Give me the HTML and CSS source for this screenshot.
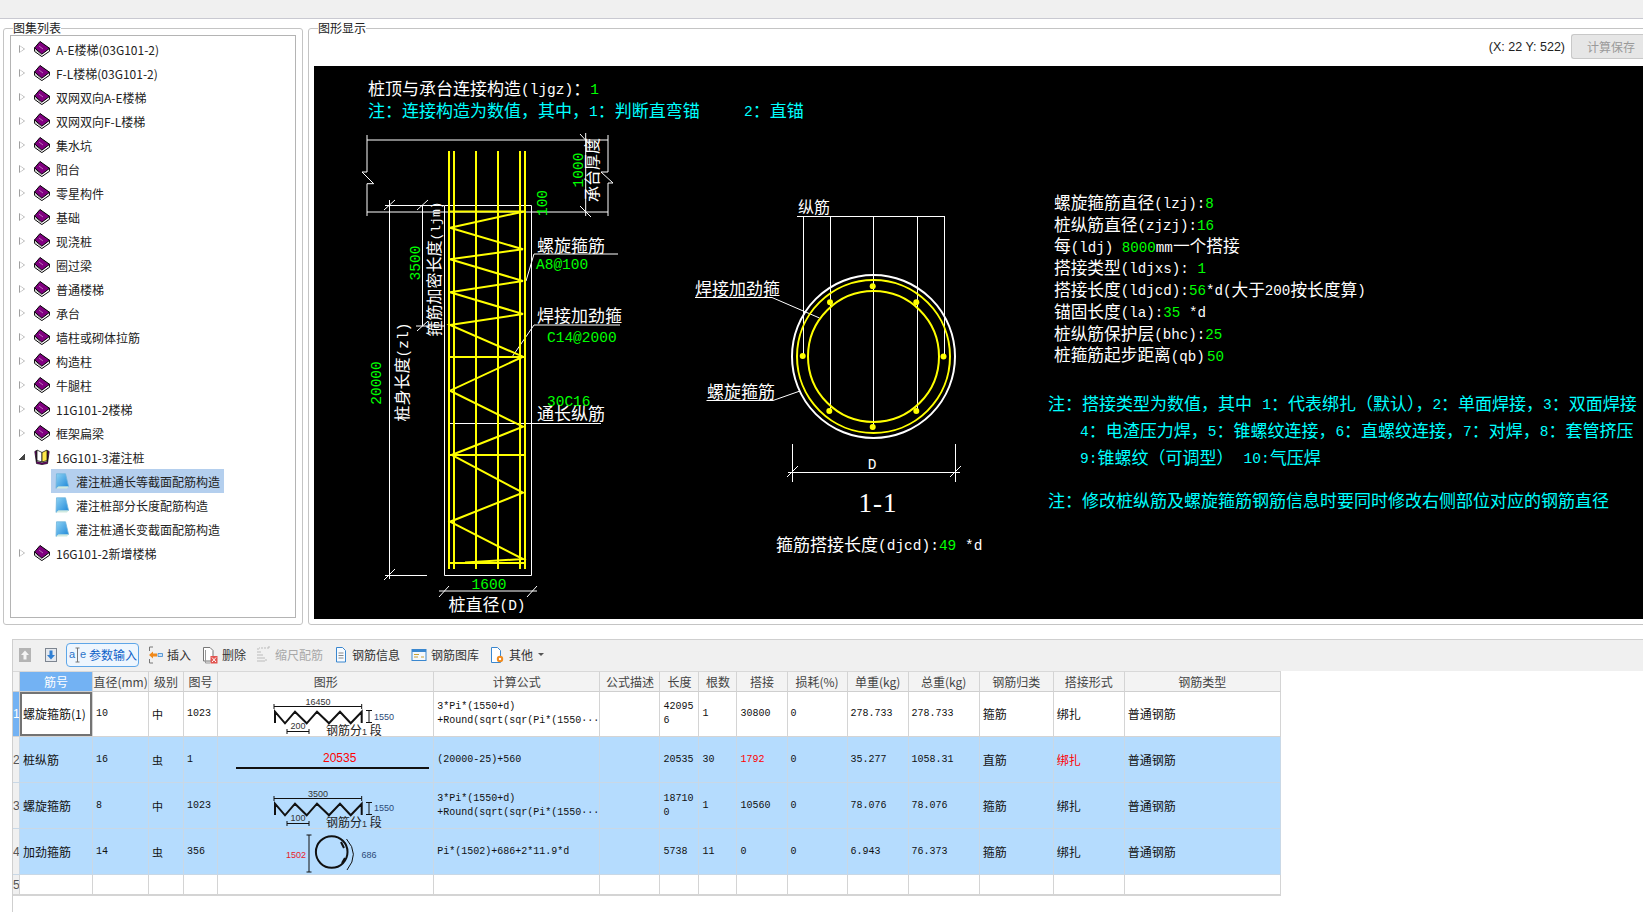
FILE: index.html
```html
<!DOCTYPE html>
<html lang="zh-CN">
<head>
<meta charset="utf-8">
<title>图集列表</title>
<link rel="stylesheet" href="styles.css">
</head>
<body>
<svg class="defs" width="0" height="0" aria-hidden="true">
  <defs>
    <symbol id="book" viewBox="0 0 16 16">
      <path d="M.6 6.9V10.4L7.8 15.6 15.6 10.2V7.4Z" fill="#fff" stroke="#000" stroke-width="1"/>
      <path d="M6 .5 15.6 7.3 7.8 13.2.6 6.9Z" fill="#800080" stroke="#000" stroke-width="1"/>
      <path d="M1.5 9 7.8 14" stroke="#888" stroke-width=".8" fill="none"/>
      <path d="M5 5 9 8" stroke="#c48ac4" stroke-width=".8" fill="none"/>
    </symbol>
    <symbol id="openbook" viewBox="0 0 16 16">
      <path d="M.8 2.500 2.500 14.500 8 15.500 13.500 14.500 15.200 2.500 13.500 1.500 13.500 12.500 8 14 2.500 12.500 2.500 1.500Z" fill="#800080" stroke="#000" stroke-width=".7"/>
      <path d="M3 1 8 3.500V13L3 11.500Z" fill="#fff" stroke="#000" stroke-width=".7"/>
      <path d="M13 1 8 3.500V13L13 11.500Z" fill="#ffe94a" stroke="#000" stroke-width=".7"/>
    </symbol>
    <linearGradient id="docblue" x1="0" y1="0" x2="1" y2="1">
      <stop offset="0" stop-color="#8fd3f4"/>
      <stop offset="1" stop-color="#1c86d8"/>
    </linearGradient>
    <symbol id="doc" viewBox="0 0 14 16">
      <path d="M1.500 .8H10.500L13.600 13.500H3.500L1 15.500Z" fill="url(#docblue)" stroke="#6fb4dc" stroke-width=".8"/>
      <path d="M1 15.500 3.500 13.500H13.600L12 15.500Z" fill="#cfe9e0"/>
    </symbol>
  </defs>
</svg>

<div class="topbar"></div>

<main class="main">
  <fieldset class="group group-left">
    <legend class="legend">图集列表</legend>
    <ul class="tree">
      <li class="node"><i class="arrow"></i><svg class="book"><use href="#book"/></svg><span>A-E楼梯(03G101-2)</span></li>
      <li class="node"><i class="arrow"></i><svg class="book"><use href="#book"/></svg><span>F-L楼梯(03G101-2)</span></li>
      <li class="node"><i class="arrow"></i><svg class="book"><use href="#book"/></svg><span>双网双向A-E楼梯</span></li>
      <li class="node"><i class="arrow"></i><svg class="book"><use href="#book"/></svg><span>双网双向F-L楼梯</span></li>
      <li class="node"><i class="arrow"></i><svg class="book"><use href="#book"/></svg><span>集水坑</span></li>
      <li class="node"><i class="arrow"></i><svg class="book"><use href="#book"/></svg><span>阳台</span></li>
      <li class="node"><i class="arrow"></i><svg class="book"><use href="#book"/></svg><span>零星构件</span></li>
      <li class="node"><i class="arrow"></i><svg class="book"><use href="#book"/></svg><span>基础</span></li>
      <li class="node"><i class="arrow"></i><svg class="book"><use href="#book"/></svg><span>现浇桩</span></li>
      <li class="node"><i class="arrow"></i><svg class="book"><use href="#book"/></svg><span>圈过梁</span></li>
      <li class="node"><i class="arrow"></i><svg class="book"><use href="#book"/></svg><span>普通楼梯</span></li>
      <li class="node"><i class="arrow"></i><svg class="book"><use href="#book"/></svg><span>承台</span></li>
      <li class="node"><i class="arrow"></i><svg class="book"><use href="#book"/></svg><span>墙柱或砌体拉筋</span></li>
      <li class="node"><i class="arrow"></i><svg class="book"><use href="#book"/></svg><span>构造柱</span></li>
      <li class="node"><i class="arrow"></i><svg class="book"><use href="#book"/></svg><span>牛腿柱</span></li>
      <li class="node"><i class="arrow"></i><svg class="book"><use href="#book"/></svg><span>11G101-2楼梯</span></li>
      <li class="node"><i class="arrow"></i><svg class="book"><use href="#book"/></svg><span>框架扁梁</span></li>
      <li class="node"><i class="arrow open"></i><svg class="book"><use href="#openbook"/></svg><span>16G101-3灌注桩</span></li>
      <li class="leaf"><div class="leaf-in selected"><svg class="docicon"><use href="#doc"/></svg><span>灌注桩通长等截面配筋构造</span></div></li>
      <li class="leaf"><div class="leaf-in"><svg class="docicon"><use href="#doc"/></svg><span>灌注桩部分长度配筋构造</span></div></li>
      <li class="leaf"><div class="leaf-in"><svg class="docicon"><use href="#doc"/></svg><span>灌注桩通长变截面配筋构造</span></div></li>
      <li class="node"><i class="arrow"></i><svg class="book"><use href="#book"/></svg><span>16G101-2新增楼梯</span></li>
    </ul>
  </fieldset>

  <fieldset class="group group-right">
    <legend class="legend">图形显示</legend>
    <div class="viewbar">
      <span class="coords">(X: 22 Y: 522)</span>
      <button class="savebtn" type="button">计算保存</button>
    </div>
    <svg class="cad" viewBox="314 66 1329 553" width="1329" height="553">
      <g class="ln">
        <path d="M367 135V172H362L373.700 183.700H367V216"/>
        <path d="M367 140H608M367 212H608"/>
        <path d="M608 135V172H601L613 183H608V216"/>
        <path d="M585.700 133V216M580 134 591 146M580 206 591 217"/>
        <path d="M444.500 205.500H531.500V575.500H444.500Z"/>
        <path d="M385 205.500H444M389.500 200V579M384 210 395 200M417 210 428 200M422.500 205V326M416 326H444M417 331 428 321M385 575.500H427M384 580 395 569"/>
        <path d="M439 591H537M439 597 449 586M527 597 537 586"/>
        <path d="M534 254H618M534 254 526 281"/>
        <path d="M534 325H620M534 325 512 357"/>
        <path d="M449 423.500H601"/>
      </g>
      <g class="yl">
        <path d="M449 151V569M454 151V569M476 151V569M498 151V569M520 151V569M525 151V569"/>
        <path d="M449 211.500H525M449 357H525M449 455H525M449 563H525"/>
        <path d="M523 211.700 450 227.700 523 249.300 450 259.300 523 281 450 292.300 523 314 450 325 523 356.700 450 390.700 523 426.700 451.700 455 523 492.700 450 521.700 523 559 465 562.500"/>
      </g>
      <g class="ln">
        <path d="M797 216.500H944.500M803.500 216V356M830.500 216V411M873.500 216V427M917.500 216V411M944.500 216V356"/>
        <path d="M695 297.500H772L819.500 318M706.500 400.500H773L800 391"/>
        <path d="M788 472.500H960M792.500 444V482M955.500 444V482M787 477 798 466M950 477 961 466"/>
      </g>
      <circle class="ring-w" cx="873.500" cy="356.500" r="81.500"/>
      <circle class="ring-y" cx="873.500" cy="356.500" r="76.500"/>
      <circle class="ring-y" cx="873.500" cy="356.500" r="65.500"/>
      <g class="dots">
        <circle cx="943.500" cy="356.500" r="3"/><circle cx="802.700" cy="356" r="3"/>
        <circle cx="872.700" cy="286.300" r="3"/><circle cx="872.700" cy="427" r="3"/>
        <circle cx="830" cy="302.300" r="3"/><circle cx="916.300" cy="302.300" r="3"/>
        <circle cx="829.300" cy="411" r="3"/><circle cx="916.300" cy="411" r="3"/>
      </g>

      <g transform="translate(1 0)">
        <text class="w sm mid" x="593" y="170" transform="rotate(-90 593 170)">承台厚度</text>
        <text class="g l mid" x="578" y="170" transform="rotate(-90 578 170)">1000</text>
        <text class="g l mid" x="542" y="203" transform="rotate(-90 542 203)">100</text>
        <text class="g l mid" x="415" y="263" transform="rotate(-90 415 263)">3500</text>
        <text class="w sm mid" x="435" y="269" transform="rotate(-90 435 269)">箍筋加密长度<tspan class="ls">(ljm)</tspan></text>
        <text class="g l mid" x="376" y="383" transform="rotate(-90 376 383)">20000</text>
        <text class="w sm mid" x="403" y="372" transform="rotate(-90 403 372)">桩身长度<tspan class="l">(zl)</tspan></text>
      </g>

      <g transform="translate(0 1)">
        <text class="w" x="368" y="89">桩顶与承台连接构造<tspan class="l">(ljgz)</tspan>：<tspan class="g l">1</tspan></text>
        <text class="c" x="368" y="111">注：连接构造为数值，其中，<tspan class="l">1</tspan>：判断直弯锚</text>
        <text class="c" x="744" y="111"><tspan class="l">2</tspan>：直锚</text>

        <text class="w" x="537" y="246">螺旋箍筋</text>
        <text class="g l" x="536" y="264">A8@100</text>
        <text class="w" x="537" y="316">焊接加劲箍</text>
        <text class="g l" x="547" y="337">C14@2000</text>
        <text class="g l" x="547" y="401">30C16</text>
        <text class="w" x="537" y="414">通长纵筋</text>
        <text class="g l mid" x="489" y="584">1600</text>
        <text class="w mid" x="487" y="605">桩直径<tspan class="l">(D)</tspan></text>

        <text class="w sm" x="798" y="208">纵筋</text>
        <text class="w" x="695" y="289">焊接加劲箍</text>
        <text class="w" x="707" y="392">螺旋箍筋</text>
        <text class="w l mid" x="872" y="464">D</text>
        <text class="w big mid" x="878" y="502">1-1</text>
        <text class="w" x="776" y="545">箍筋搭接长度<tspan class="l">(djcd):</tspan><tspan class="g l">49 </tspan><tspan class="l">*d</tspan></text>

        <g class="list">
          <text class="w" x="1054" y="203">螺旋箍筋直径<tspan class="l">(lzj):</tspan><tspan class="g l">8</tspan></text>
          <text class="w" x="1054" y="225">桩纵筋直径<tspan class="l">(zjzj):</tspan><tspan class="g l">16</tspan></text>
          <text class="w" x="1054" y="246.500">每<tspan class="l">(ldj) </tspan><tspan class="g l">8000</tspan><tspan class="l">mm</tspan>一个搭接</text>
          <text class="w" x="1054" y="268">搭接类型<tspan class="l">(ldjxs): </tspan><tspan class="g l">1</tspan></text>
          <text class="w" x="1054" y="290">搭接长度<tspan class="l">(ldjcd):</tspan><tspan class="g l">56</tspan><tspan class="l">*d(</tspan>大于<tspan class="l">200</tspan>按长度算<tspan class="l">)</tspan></text>
          <text class="w" x="1054" y="312">锚固长度<tspan class="l">(la):</tspan><tspan class="g l">35 </tspan><tspan class="l">*d</tspan></text>
          <text class="w" x="1054" y="334">桩纵筋保护层<tspan class="l">(bhc):</tspan><tspan class="g l">25</tspan></text>
          <text class="w" x="1054" y="355.500">桩箍筋起步距离<tspan class="l">(qb)</tspan><tspan class="g l" dx="2">50</tspan></text>
        </g>

        <text class="c" x="1048" y="404">注：搭接类型为数值，其中 <tspan class="l">1</tspan>：代表绑扎（默认），<tspan class="l">2</tspan>：单面焊接，<tspan class="l">3</tspan>：双面焊接</text>
        <text class="c" x="1080" y="431"><tspan class="l">4</tspan>：电渣压力焊，<tspan class="l">5</tspan>：锥螺纹连接，<tspan class="l">6</tspan>：直螺纹连接，<tspan class="l">7</tspan>：对焊，<tspan class="l">8</tspan>：套管挤压</text>
        <text class="c" x="1080" y="458"><tspan class="l">9:</tspan>锥螺纹（可调型） <tspan class="l">10:</tspan>气压焊</text>
        <text class="c" x="1048" y="501">注：修改桩纵筋及螺旋箍筋钢筋信息时要同时修改右侧部位对应的钢筋直径</text>
      </g>
    </svg>
  </fieldset>
</main>

<section class="panel">
  <div class="toolbar">
    <svg class="ic up" width="12" height="14" viewBox="0 0 12 14"><rect width="12" height="14" fill="#b4b4b4"/><path d="M6 2.500 10 7H7.500V11.500H4.500V7H2Z" fill="#f4f4f4"/></svg>
    <svg class="ic down" width="12" height="14" viewBox="0 0 12 14"><rect x=".5" y=".5" width="11" height="13" fill="#e4e8ee" stroke="#7d8590"/><path d="M6 11.500 10 7H7.500V2.500H4.500V7H2Z" fill="#2f7fd4"/></svg>
    <button class="tb tb-active" type="button">
      <svg width="18" height="18" viewBox="0 0 18 18"><text class="ae" x="0" y="12">a</text><text class="ae" x="11" y="12">e</text><path d="M8.500 2V16M6.500 2H10.500M6.500 16H10.500" stroke="#777" fill="none"/></svg>
      <span>参数输入</span>
    </button>
    <div class="tb"><svg width="15" height="20" viewBox="0 0 15 20"><path d="M5 2H1.500V6M5 18H1.500V14" stroke="#777" fill="none"/><path d="M1 10 5 6.500V8.500H9V11.500H5V13.500Z" fill="#f08a1d"/><path d="M10 8.500H14.500V11.500H10Z" fill="#cfe3f6" stroke="#3a87cf" stroke-width=".8"/></svg><span>插入</span></div>
    <div class="tb"><svg width="16" height="20" viewBox="0 0 16 20"><path d="M1.500 2.500H8L11 5.500V16H1.500Z" fill="#fff" stroke="#777"/><path d="M3.500 5V18H8" fill="none" stroke="#999"/><rect x="8.500" y="11" width="7" height="7.500" fill="#e2544f"/><path d="M10 12.500 14 17M14 12.500 10 17" stroke="#fff"/></svg><span>删除</span></div>
    <div class="tb off"><svg width="14" height="20" viewBox="0 0 14 20"><path d="M1 3V17M3 6V17M5 9V17M7 12V17M9 14V17M12 3H2M12 3V1" stroke="#bbb" stroke-dasharray="2 1" fill="none"/></svg><span>缩尺配筋</span></div>
    <div class="tb"><svg width="14" height="20" viewBox="0 0 14 20"><path d="M2.500 2.500H8.500L11.500 5.500V17H2.500Z" fill="#f7fbff" stroke="#3a87cf"/><path d="M4.500 8H9.500M4.500 10.500H9.500M4.500 13H9.500" stroke="#888"/></svg><span>钢筋信息</span></div>
    <div class="tb"><svg width="16" height="20" viewBox="0 0 16 20"><rect x="1" y="4.500" width="14" height="11" fill="#f4f8fc" stroke="#3a87cf"/><rect x="1" y="4.500" width="14" height="2.500" fill="#3a87cf"/><path d="M3 9.500H8M3 12H7M10 12H13" stroke="#c9a034"/></svg><span>钢筋图库</span></div>
    <div class="tb"><svg width="15" height="20" viewBox="0 0 15 20"><path d="M1.500 2.500H7.500L10.500 5.500V17.500H1.500Z" fill="#fff" stroke="#3a87cf"/><circle cx="10" cy="14" r="3.200" fill="#f08a1d"/><circle cx="10" cy="14" r="1.200" fill="#fff"/></svg><span>其他</span><i class="caret"></i></div>
  </div>

  <table class="grid">
    <colgroup>
      <col class="w8"><col class="w73"><col class="w56"><col class="w35"><col class="w34"><col class="w216"><col class="w166"><col class="w60"><col class="w39"><col class="w38"><col class="w50"><col class="w60"><col class="w61"><col class="w71"><col class="w74"><col class="w71"><col class="w156">
    </colgroup>
    <thead>
      <tr>
        <th></th><th class="th-active">筋号</th><th>直径(mm)</th><th>级别</th><th>图号</th><th>图形</th><th>计算公式</th><th>公式描述</th><th>长度</th><th>根数</th><th>搭接</th><th>损耗(%)</th><th>单重(kg)</th><th>总重(kg)</th><th>钢筋归类</th><th>搭接形式</th><th>钢筋类型</th>
      </tr>
    </thead>
    <tbody>
      <tr class="r1">
        <td class="num num-active">1</td><td class="z cur">螺旋箍筋(1)</td><td>10</td><td class="lv">中</td><td>1023</td>
        <td class="shape">
          <svg class="sh" viewBox="0 0 216 44" width="216" height="44">
            <path class="sl" d="M56 14.500H143.700M56 12V17M143.700 12V17"/>
            <path class="st" d="M57 31V19.700L67 31.300 77 19.700 88.700 31.300 99 19.700 111 31.300 122 19.700 132.700 31.300 143.700 19.700V31"/>
            <path class="sl" d="M148 18.500H154M151 18.500V30.500M148 30.500H154M69 39.500H91M69 37V42M91 37V42"/>
            <text class="sn mid" x="100" y="13">16450</text>
            <text class="sn bl" x="156" y="27.500">1550</text>
            <text class="sn mid" x="80" y="37">200</text>
            <text class="sz" x="108" y="43">钢筋分<tspan class="sn">1</tspan> 段</text>
          </svg>
        </td>
        <td>3*Pi*(1550+d)<br>+Round(sqrt(sqr(Pi*(1550···</td><td></td><td>42095<br>6</td><td>1</td><td>30800</td><td>0</td><td>278.733</td><td>278.733</td><td class="z">箍筋</td><td class="z">绑扎</td><td class="z">普通钢筋</td>
      </tr>
      <tr class="sel">
        <td class="num">2</td><td class="z">桩纵筋</td><td>16</td><td class="lv">虫</td><td>1</td>
        <td class="shape">
          <svg class="sh" viewBox="0 0 216 45" width="216" height="45">
            <text class="rn mid" x="121.700" y="25">20535</text>
            <path class="st" d="M18 31H211"/>
          </svg>
        </td>
        <td>(20000-25)+560</td><td></td><td>20535</td><td>30</td><td class="red">1792</td><td>0</td><td>35.277</td><td>1058.31</td><td class="z">直筋</td><td class="z red">绑扎</td><td class="z">普通钢筋</td>
      </tr>
      <tr class="sel">
        <td class="num">3</td><td class="z">螺旋箍筋</td><td>8</td><td class="lv">中</td><td>1023</td>
        <td class="shape">
          <svg class="sh" viewBox="0 0 216 45" width="216" height="45">
            <g transform="translate(0 1)">
              <path class="sl" d="M56 14.500H143.700M56 12V17M143.700 12V17"/>
              <path class="st" d="M57 31V19.700L67 31.300 77 19.700 88.700 31.300 99 19.700 111 31.300 122 19.700 132.700 31.300 143.700 19.700V31"/>
              <path class="sl" d="M148 18.500H154M151 18.500V30.500M148 30.500H154M69 39.500H91M69 37V42M91 37V42"/>
              <text class="sn mid" x="100" y="13">3500</text>
              <text class="sn bl" x="156" y="27">1550</text>
              <text class="sn mid" x="80" y="37">100</text>
              <text class="sz" x="108" y="43">钢筋分<tspan class="sn">1</tspan> 段</text>
            </g>
          </svg>
        </td>
        <td>3*Pi*(1550+d)<br>+Round(sqrt(sqr(Pi*(1550···</td><td></td><td>18710<br>0</td><td>1</td><td>10560</td><td>0</td><td>78.076</td><td>78.076</td><td class="z">箍筋</td><td class="z">绑扎</td><td class="z">普通钢筋</td>
      </tr>
      <tr class="sel">
        <td class="num">4</td><td class="z">加劲箍筋</td><td>14</td><td class="lv">虫</td><td>356</td>
        <td class="shape">
          <svg class="sh" viewBox="0 0 216 45" width="216" height="45">
            <path class="sl" d="M91 6V43M88.500 6H93.500M88.500 43H93.500"/>
            <circle class="sc" cx="113.700" cy="23" r="15.800"/>
            <path class="st" d="M123 13 126 19M124 34 127 29"/>
            <path class="sl" d="M128.500 10Q142 25 129 41"/>
            <text class="rs mid" x="78" y="29">1502</text>
            <text class="sn bl mid" x="151" y="29">686</text>
          </svg>
        </td>
        <td>Pi*(1502)+686+2*11.9*d</td><td></td><td>5738</td><td>11</td><td>0</td><td>0</td><td>6.943</td><td>76.373</td><td class="z">箍筋</td><td class="z">绑扎</td><td class="z">普通钢筋</td>
      </tr>
      <tr class="r5">
        <td class="num">5</td><td></td><td></td><td></td><td></td><td></td><td></td><td></td><td></td><td></td><td></td><td></td><td></td><td></td><td></td><td></td><td></td>
      </tr>
    </tbody>
  </table>
</section>
</body>
</html>
```

FILE: styles.css
```css
* { box-sizing: border-box; }

html, body {
  margin: 0;
  padding: 0;
  width: 1643px;
  height: 912px;
  overflow: hidden;
  background: #fff;
  font-family: "Noto Sans CJK SC", "Liberation Sans", sans-serif;
  font-size: 12px;
  color: #222;
}

.defs { position: absolute; }

.topbar {
  height: 19px;
  background: #f0f0f0;
  border-bottom: 1px solid #c9c9d1;
}

.main {
  display: flex;
  gap: 5px;
  padding: 3px 0 0 3px;
  width: 1660px;
}

.group {
  margin: 0;
  height: 603px;
  border: 1px solid #c4c4c4;
  border-radius: 3px;
  min-width: 0;
}

.group-left {
  width: 300px;
  padding: 1px 6px 6px 6px;
}

.group-right {
  width: 1342px;
  padding: 0 0 4px 5px;
}

.legend {
  padding: 0;
  margin-left: 3px;
  font-size: 12px;
  line-height: 12px;
  color: #222;
  background: #fff;
}

.group-right .legend { margin-left: 4px; }

.tree {
  list-style: none;
  margin: 0;
  padding: 1px 0 0;
  height: 100%;
  border: 1px solid #b4b4b4;
}

.node {
  display: flex;
  align-items: center;
  height: 24px;
  padding-left: 8px;
}

.arrow {
  width: 0;
  height: 0;
  margin-right: 9px;
  border-left: 6px solid #a0a0a0;
  border-top: 4.500px solid transparent;
  border-bottom: 4.500px solid transparent;
  position: relative;
}

.arrow::after {
  content: "";
  position: absolute;
  left: -5px;
  top: -3px;
  width: 0;
  height: 0;
  border-left: 4px solid #fff;
  border-top: 3px solid transparent;
  border-bottom: 3px solid transparent;
}

.arrow.open {
  border: 0;
  width: 6px;
  height: 6px;
  background: linear-gradient(135deg, transparent 50%, #444 50%);
}

.arrow.open::after { display: none; }

.book {
  width: 16px;
  height: 16px;
  margin-right: 6px;
  flex: none;
}

.leaf {
  height: 24px;
  padding-left: 40px;
}

.leaf-in {
  display: flex;
  align-items: center;
  width: 173px;
  height: 24px;
  padding-left: 4px;
}

.selected { background: #b4cfee; }

.docicon {
  width: 14px;
  height: 16px;
  margin-right: 7px;
  flex: none;
}

.viewbar {
  display: flex;
  justify-content: flex-end;
  width: 1329px;
  height: 32px;
  gap: 6px;
  overflow: hidden;
}

.coords {
  line-height: 27px;
  font-family: "Liberation Sans", sans-serif;
  font-size: 12.500px;
  color: #222;
}

.savebtn {
  flex: none;
  width: 72px;
  height: 25px;
  padding: 0;
  text-align: left;
  text-indent: 15px;
  border: 1px solid #c8c8c8;
  border-right: 0;
  border-radius: 3px 0 0 3px;
  background: #e6e6e6;
  color: #9a9a9a;
  font: 12px "Noto Sans CJK SC", sans-serif;
}

.cad {
  display: block;
  background: #000;
}

.cad text {
  font-family: "Liberation Mono", "Noto Sans CJK SC", monospace;
  font-size: 17px;
  dominant-baseline: central;
  fill: #fff;
}

.cad .sm { font-size: 16px; }
.cad .big { font: 27px "Liberation Serif", serif; letter-spacing: 1px; dominant-baseline: central; }
.cad .mid { text-anchor: middle; }
.cad .c { fill: #0ff; }
.cad .g { fill: #0f0; }
.cad .l { font-size: 14.500px; }
.cad .ls { font-size: 13px; }
.cad .list text { font-size: 16.700px; }
.cad .list .l { font-size: 14.200px; }

.cad .ln path { fill: none; stroke: #fff; stroke-width: 1; }
.cad .yl path { fill: none; stroke: #ff0; stroke-width: 2; }
.ring-w { fill: none; stroke: #fff; stroke-width: 2; }
.ring-y { fill: none; stroke: #ff0; stroke-width: 2; }
.dots circle { fill: #ff0; }

.panel {
  margin: 14px 0 0 12px;
  height: 273px;
  border-left: 1px solid #cfcfcf;
  border-top: 1px solid #cfcfcf;
}

.toolbar {
  display: flex;
  align-items: center;
  gap: 11px;
  height: 31px;
  padding: 0 0 2px 6px;
  background: #f0f0f0;
}

.ic { flex: none; }
.up { margin-right: 3px; }
.down { margin-right: -2px; }

.tb {
  display: flex;
  align-items: center;
  gap: 4px;
  padding: 0;
  color: #333;
  font: 12px "Noto Sans CJK SC", sans-serif;
}

.tb-active {
  width: 73px;
  height: 24px;
  gap: 2px;
  margin-right: -2px;
  padding-left: 2px;
  border: 1px solid #5ea6e8;
  border-radius: 4px;
  background: #eef6fe;
  color: #0e62c8;
  white-space: nowrap;
}

.ae {
  font: 11px "Liberation Sans", sans-serif;
  fill: #2a74c8;
}

.off { color: #a8a8a8; }

.caret {
  width: 0;
  height: 0;
  margin-left: 1px;
  border-top: 3px solid #555;
  border-left: 3px solid transparent;
  border-right: 3px solid transparent;
}

.grid {
  table-layout: fixed;
  width: 1268px;
  border-collapse: separate;
  border-spacing: 0;
  font: 10px/14px "Liberation Mono", "Noto Sans CJK SC", monospace;
  color: #111;
}

.w8 { width: 7px; }
.w73 { width: 73px; }
.w56 { width: 56px; }
.w35 { width: 35px; }
.w34 { width: 34px; }
.w216 { width: 216px; }
.w166 { width: 166px; }
.w60 { width: 60px; }
.w39 { width: 39px; }
.w38 { width: 38px; }
.w50 { width: 50px; }
.w61 { width: 61px; }
.w71 { width: 71px; }
.w74 { width: 74px; }
.w156 { width: 156px; }

th {
  height: 21px;
  padding: 0;
  background: #f3f3f3;
  border-top: 1px solid #d8d8d8;
  border-right: 1px solid #d4d4d4;
  border-bottom: 1px solid #cfcfcf;
  font: 400 12px/19px "Noto Sans CJK SC", sans-serif;
  color: #444;
  white-space: nowrap;
  overflow: hidden;
}

th.th-active { background: #73b2f3; color: #fff; }

td {
  padding: 0 0 0 3px;
  border-right: 1px solid #d4d4d4;
  border-bottom: 1px solid #d4d4d4;
  white-space: nowrap;
  overflow: hidden;
  vertical-align: middle;
}

.r1 td { height: 45px; }
.sel td { height: 46px; background: #b5dcfe; border-color: #c9d8e6; }
.r5 td { height: 21px; border-bottom-width: 2px; }

td.z { font: 12px/14px "Noto Sans CJK SC", sans-serif; }
td.lv { font: 11px/14px "Noto Sans CJK SC", sans-serif; padding-left: 3px; }
td.red, .red { color: #f00; }

td.num {
  padding: 0;
  background: #f0f0f0;
  font: 12px/14px "Liberation Sans", sans-serif;
  color: #555;
  text-align: center;
}

td.num-active { background: #73b2f3; color: #fff; }

td.cur { box-shadow: inset 0 0 0 2px #737373; padding-left: 3px; }

td.shape { padding: 0; overflow: visible; }
.sh { display: block; overflow: visible; }

.sl { fill: none; stroke: #111; stroke-width: 1; }
.st { fill: none; stroke: #111; stroke-width: 2; }
.sc { fill: none; stroke: #111; stroke-width: 2; }
.sn { font: 9px "Liberation Sans", sans-serif; fill: #333; }
.bl { fill: #2c4a78; }
.sz { font: 12px "Noto Sans CJK SC", sans-serif; fill: #222; }
.rn { font: 12px "Liberation Sans", sans-serif; fill: #f00; }
.rs { font: 9px "Liberation Sans", sans-serif; fill: #e8202a; }
.mid { text-anchor: middle; }
```
